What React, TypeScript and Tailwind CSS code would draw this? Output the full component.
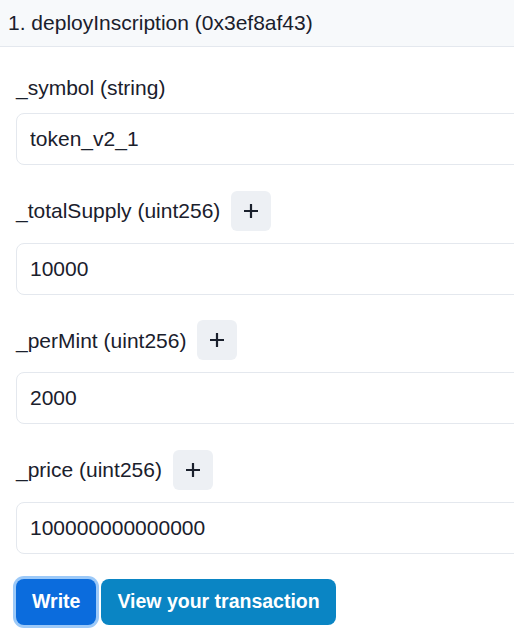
const fields = [
  { label: "_symbol (string)", value: "token_v2_1", add: false },
  { label: "_totalSupply (uint256)", value: "10000", add: true },
  { label: "_perMint (uint256)", value: "2000", add: true },
  { label: "_price (uint256)", value: "100000000000000", add: true },
];

const PlusIcon = () => (
  <svg width="14" height="14" viewBox="0 0 14 14" fill="none">
    <path d="M7 0.5V13.5M0.5 7H13.5" stroke="#1a202c" strokeWidth="2.2" strokeLinecap="round" />
  </svg>
);

const App = () => {
  return (
    <div
      className="w-[514px] h-[638px] overflow-hidden bg-white text-[#1a202c]"
      style={{ fontFamily: '"Liberation Sans", Arial, sans-serif' }}
    >
      <div className="h-[47px] flex items-center px-2 bg-[#f7f9fb] border-b border-[#e4e8ee] text-[21px] whitespace-nowrap">
        1. deployInscription (0x3ef8af43)
      </div>

      <div className="flex flex-col pl-4 pt-[27px]">
        {fields.map((f, i) => (
          <div key={f.label} className={i === 0 ? "flex flex-col" : "flex flex-col mt-[25.5px]"}>
            <div className="flex items-center mb-3 whitespace-nowrap">
              <span className="text-[21px] leading-[27px]">{f.label}</span>
              {f.add && (
                <button className="ml-[11px] w-10 h-10 flex items-center justify-center rounded-md bg-[#edf0f4]">
                  <PlusIcon />
                </button>
              )}
            </div>
            <input
              readOnly
              value={f.value}
              className="w-[600px] h-[52px] pl-[13px] border border-[#e4e8ee] rounded-lg text-[21px] text-[#1a202c] bg-white outline-none"
            />
          </div>
        ))}

        <div className="flex items-center gap-[5px] mt-[25px]">
          <button className="h-[46px] px-4 rounded-lg bg-[#0b6cdd] text-white text-[19.5px] font-bold ring-[3px] ring-[#9cc9f8]">
            Write
          </button>
          <button className="h-[46px] px-4 rounded-lg bg-[#0a85c4] text-white text-[19.5px] font-bold">
            View your transaction
          </button>
        </div>
      </div>
    </div>
  );
};

export default App;
